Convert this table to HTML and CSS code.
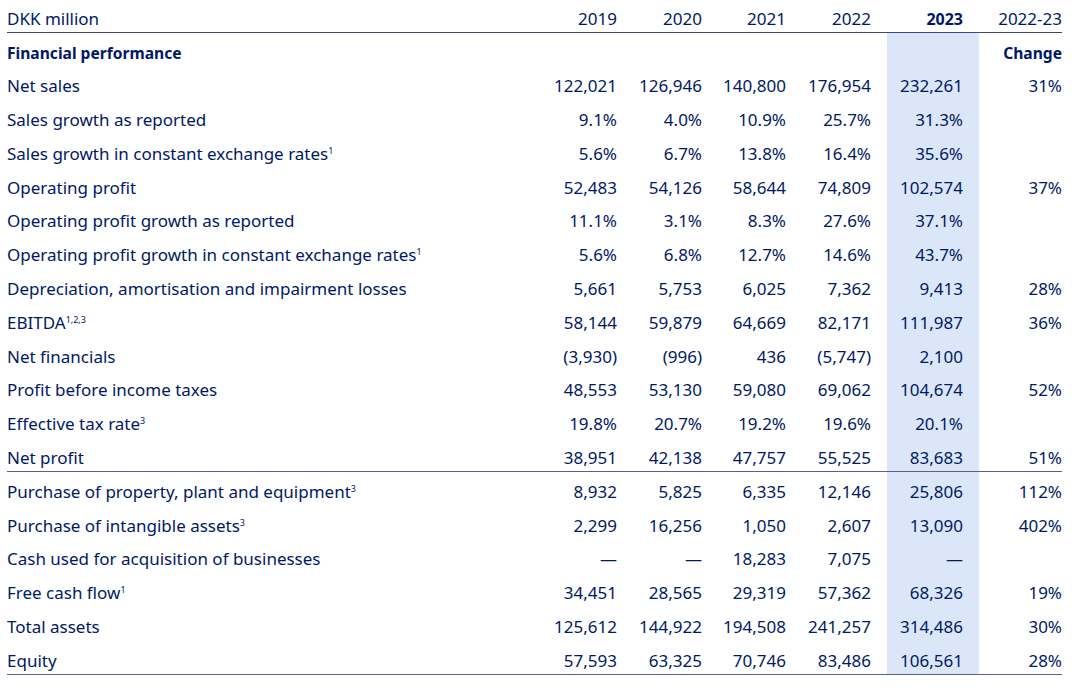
FILE: index.html
```html
<!DOCTYPE html>
<html lang="en">
<head>
<meta charset="utf-8">
<title>Financial highlights</title>
<link rel="stylesheet" href="styles.css">
</head>
<body>
<table class="fin">
  <colgroup>
    <col class="c-label"><col class="c-y"><col class="c-y"><col class="c-y21"><col class="c-y"><col class="c-hl"><col class="c-chg">
  </colgroup>
  <thead>
    <tr>
      <th class="label">DKK million</th>
      <th>2019</th><th>2020</th><th>2021</th><th>2022</th><th class="cur">2023</th><th class="chg">2022-23</th>
    </tr>
  </thead>
  <tbody>
    <tr class="section"><td class="label">Financial performance</td><td></td><td></td><td></td><td></td><td class="hl"></td><td class="chg">Change</td></tr>
    <tr><td class="label">Net sales</td><td>122,021</td><td>126,946</td><td>140,800</td><td>176,954</td><td class="hl">232,261</td><td class="chg">31%</td></tr>
    <tr><td class="label">Sales growth as reported</td><td>9.1%</td><td>4.0%</td><td>10.9%</td><td>25.7%</td><td class="hl">31.3%</td><td class="chg"></td></tr>
    <tr><td class="label">Sales growth in constant exchange rates<sup>1</sup></td><td>5.6%</td><td>6.7%</td><td>13.8%</td><td>16.4%</td><td class="hl">35.6%</td><td class="chg"></td></tr>
    <tr><td class="label">Operating profit</td><td>52,483</td><td>54,126</td><td>58,644</td><td>74,809</td><td class="hl">102,574</td><td class="chg">37%</td></tr>
    <tr><td class="label">Operating profit growth as reported</td><td>11.1%</td><td>3.1%</td><td>8.3%</td><td>27.6%</td><td class="hl">37.1%</td><td class="chg"></td></tr>
    <tr><td class="label">Operating profit growth in constant exchange rates<sup>1</sup></td><td>5.6%</td><td>6.8%</td><td>12.7%</td><td>14.6%</td><td class="hl">43.7%</td><td class="chg"></td></tr>
    <tr><td class="label">Depreciation, amortisation and impairment losses</td><td>5,661</td><td>5,753</td><td>6,025</td><td>7,362</td><td class="hl">9,413</td><td class="chg">28%</td></tr>
    <tr><td class="label">EBITDA<sup>1,2,3</sup></td><td>58,144</td><td>59,879</td><td>64,669</td><td>82,171</td><td class="hl">111,987</td><td class="chg">36%</td></tr>
    <tr><td class="label">Net financials</td><td>(3,930)</td><td>(996)</td><td>436</td><td>(5,747)</td><td class="hl">2,100</td><td class="chg"></td></tr>
    <tr><td class="label">Profit before income taxes</td><td>48,553</td><td>53,130</td><td>59,080</td><td>69,062</td><td class="hl">104,674</td><td class="chg">52%</td></tr>
    <tr><td class="label">Effective tax rate<sup>3</sup></td><td>19.8%</td><td>20.7%</td><td>19.2%</td><td>19.6%</td><td class="hl">20.1%</td><td class="chg"></td></tr>
    <tr class="rule"><td class="label">Net profit</td><td>38,951</td><td>42,138</td><td>47,757</td><td>55,525</td><td class="hl">83,683</td><td class="chg">51%</td></tr>
    <tr><td class="label">Purchase of property, plant and equipment<sup>3</sup></td><td>8,932</td><td>5,825</td><td>6,335</td><td>12,146</td><td class="hl">25,806</td><td class="chg">112%</td></tr>
    <tr><td class="label">Purchase of intangible assets<sup>3</sup></td><td>2,299</td><td>16,256</td><td>1,050</td><td>2,607</td><td class="hl">13,090</td><td class="chg">402%</td></tr>
    <tr><td class="label">Cash used for acquisition of businesses</td><td>—</td><td>—</td><td>18,283</td><td>7,075</td><td class="hl">—</td><td class="chg"></td></tr>
    <tr><td class="label">Free cash flow<sup>1</sup></td><td>34,451</td><td>28,565</td><td>29,319</td><td>57,362</td><td class="hl">68,326</td><td class="chg">19%</td></tr>
    <tr><td class="label">Total assets</td><td>125,612</td><td>144,922</td><td>194,508</td><td>241,257</td><td class="hl">314,486</td><td class="chg">30%</td></tr>
    <tr class="rule"><td class="label">Equity</td><td>57,593</td><td>63,325</td><td>70,746</td><td>83,486</td><td class="hl">106,561</td><td class="chg">28%</td></tr>
  </tbody>
</table>
</body>
</html>
```
FILE: styles.css
```css
html, body {
  margin: 0;
  padding: 0;
  background: #ffffff;
}

body {
  font-family: "Noto Sans", "Open Sans", sans-serif;
  font-size: 17px;
  color: #001965;
}

.fin {
  margin-left: 7px;
  width: 1055px;
  table-layout: fixed;
  border-collapse: separate;
  border-spacing: 0;
}

.c-label { width: 541px; }
.c-y { width: 85px; }
.c-y21 { width: 84px; }
.c-hl { width: 92px; }
.c-chg { width: 83px; }

.fin th,
.fin td {
  text-align: right;
  white-space: nowrap;
  padding: 7.5px 16px 2.3px 0;
  line-height: 24px;
  vertical-align: top;
}

.fin th {
  font-weight: 400;
  padding: 7px 16px 1px 0;
  border-bottom: 1px solid #3f467a;
}

.fin .label {
  text-align: left;
  padding-right: 0;
}

.fin .chg {
  padding-right: 0;
}

.fin th.cur {
  font-weight: 700;
  font-size: 16px;
}

.fin td.hl {
  background: #dbe7f8;
}

.section td {
  font-weight: 700;
  font-size: 15.6px;
}

.rule td {
  padding-bottom: 1.3px;
  border-bottom: 1px solid #5a5f8e;
}

sup {
  font-size: 9px;
  line-height: 0;
  vertical-align: 6px;
  margin-left: 0;
}
```
